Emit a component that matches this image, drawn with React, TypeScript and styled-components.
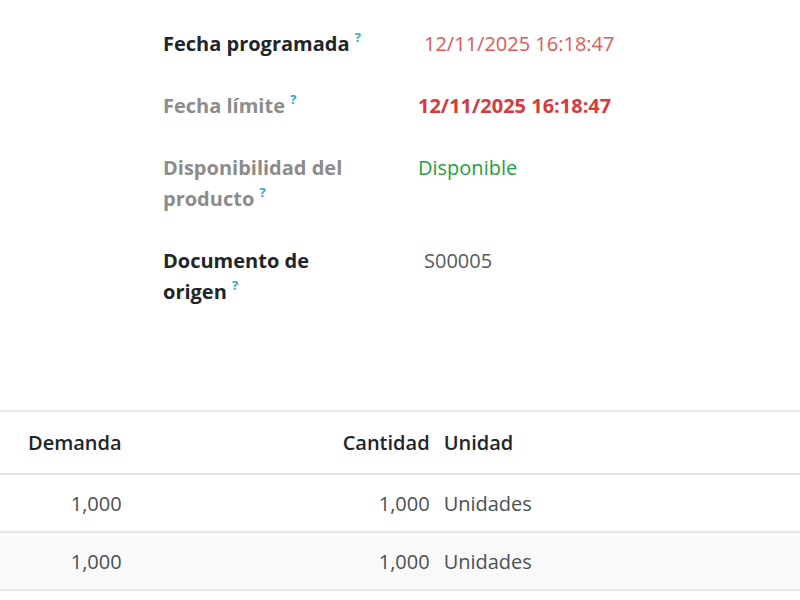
import React from 'react';
import styled, { createGlobalStyle } from 'styled-components';

const GlobalStyle = createGlobalStyle`
  html, body {
    margin: 0;
    padding: 0;
    background: #fff;
    font-family: "Open Sans", "Noto Sans", sans-serif;
    color: #495057;
  }
`;

const Page = styled.div`
  width: 800px;
  height: 600px;
  overflow: hidden;
  background: #fff;
`;

const FieldGroup = styled.div`
  display: grid;
  grid-template-columns: 255px 1fr;
  grid-auto-rows: min-content;
  row-gap: 31px;
  padding: 28px 0 0 163px;
  height: 410px;
  box-sizing: border-box;
`;

const Label = styled.div<{ $muted?: boolean }>`
  font-size: 20px;
  line-height: 31px;
  font-weight: 700;
  color: ${p => (p.$muted ? '#8c8c8c' : '#212529')};
  max-width: 210px;
`;

const Help = styled.span`
  position: relative;
  top: -9px;
  font-size: 13px;
  line-height: 0;
  font-weight: 700;
  color: #3aa3c4;
`;

const Value = styled.div<{ $color?: string; $bold?: boolean; $inset?: boolean }>`
  font-size: 20px;
  line-height: 31px;
  font-weight: ${p => (p.$bold ? 700 : 400)};
  color: ${p => p.$color || '#495057'};
  padding-left: ${p => (p.$inset ? '6px' : '0')};
`;

const Table = styled.table`
  width: 100%;
  border-collapse: collapse;
  font-size: 20px;
`;

const HeadCell = styled.th<{ $right?: boolean; $first?: boolean }>`
  text-align: ${p => (p.$right ? 'right' : 'left')};
  font-weight: 600;
  color: #212529;
  height: 61px;
  padding: 0 7px 0 ${p => (p.$first ? '28px' : '7px')};
  border-top: 2px solid #e6e6e6;
  border-bottom: 2px solid #e6e6e6;
`;

const Row = styled.tr<{ $striped?: boolean }>`
  background: ${p => (p.$striped ? '#f9f9f9' : '#fff')};
  border-bottom: 2px solid #e6e6e6;
`;

const Cell = styled.td<{ $right?: boolean }>`
  text-align: ${p => (p.$right ? 'right' : 'left')};
  color: #495057;
  height: 56px;
  padding: 0 7px;
`;

const fields = [
  { label: 'Fecha programada', value: '12/11/2025 16:18:47', color: '#e0595a', inset: true },
  { label: 'Fecha límite', muted: true, value: '12/11/2025 16:18:47', color: '#d9393b', bold: true },
  { label: 'Disponibilidad del producto', muted: true, value: 'Disponible', color: '#22a044' },
  { label: 'Documento de origen', value: 'S00005', color: '#555b61', inset: true },
];

const lines = [
  { demand: '1,000', qty: '1,000', unit: 'Unidades' },
  { demand: '1,000', qty: '1,000', unit: 'Unidades' },
];

export default function App() {
  return (
    <Page>
      <GlobalStyle />
      <FieldGroup>
        {fields.map(f => (
          <React.Fragment key={f.label}>
            <Label $muted={f.muted}>
              {f.label}
              {'\u00a0'}
              <Help>?</Help>
            </Label>
            <Value $color={f.color} $bold={f.bold} $inset={f.inset}>
              {f.value}
            </Value>
          </React.Fragment>
        ))}
      </FieldGroup>
      <Table>
        <colgroup>
          <col style={{ width: 128 }} />
          <col style={{ width: 308 }} />
          <col />
        </colgroup>
        <thead>
          <tr>
            <HeadCell $first>Demanda</HeadCell>
            <HeadCell $right>Cantidad</HeadCell>
            <HeadCell>Unidad</HeadCell>
          </tr>
        </thead>
        <tbody>
          {lines.map((l, i) => (
            <Row key={i} $striped={i % 2 === 1}>
              <Cell $right>{l.demand}</Cell>
              <Cell $right>{l.qty}</Cell>
              <Cell>{l.unit}</Cell>
            </Row>
          ))}
        </tbody>
      </Table>
    </Page>
  );
}
